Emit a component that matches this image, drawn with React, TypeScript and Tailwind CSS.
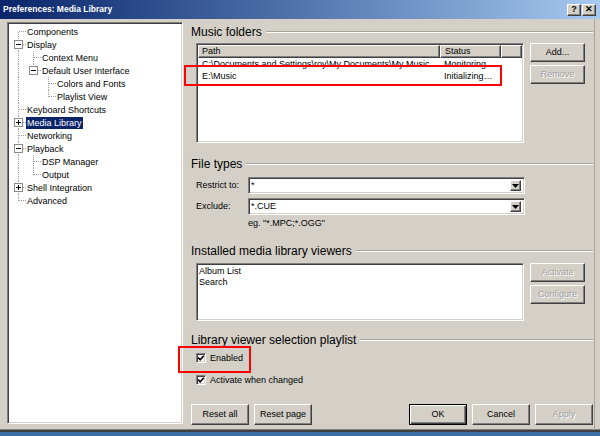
import React from 'react';

const sunken =
  'border border-t-[#808080] border-l-[#808080] border-b-white border-r-white shadow-[inset_1px_1px_0_#404040,inset_-1px_-1px_0_#d4d0c8]';
const raised =
  'border border-t-white border-l-white border-b-[#404040] border-r-[#404040] shadow-[inset_-1px_-1px_0_#808080]';

type TreeNode = {
  label: string;
  cont: boolean[];
  first?: boolean;
  last?: boolean;
  box?: '+' | '-';
  selected?: boolean;
};

const tree: TreeNode[] = [
  { label: 'Components', cont: [], first: true },
  { label: 'Display', cont: [], box: '-' },
  { label: 'Context Menu', cont: [true] },
  { label: 'Default User Interface', cont: [true], last: true, box: '-' },
  { label: 'Colors and Fonts', cont: [true, false] },
  { label: 'Playlist View', cont: [true, false], last: true },
  { label: 'Keyboard Shortcuts', cont: [] },
  { label: 'Media Library', cont: [], box: '+', selected: true },
  { label: 'Networking', cont: [] },
  { label: 'Playback', cont: [], box: '-' },
  { label: 'DSP Manager', cont: [true] },
  { label: 'Output', cont: [true], last: true },
  { label: 'Shell Integration', cont: [], box: '+' },
  { label: 'Advanced', cont: [], last: true },
];

function TreeRow({ node }: { node: TreeNode }) {
  const dot = { stroke: '#a0a0a0', strokeDasharray: '1 1', shapeRendering: 'crispEdges' as const };
  return (
    <div className="flex items-center h-[13px]">
      {node.cont.map((c, i) => (
        <svg key={i} width="15" height="13" className="shrink-0">
          {c && <line x1="7.5" y1="0" x2="7.5" y2="13" {...dot} />}
        </svg>
      ))}
      <svg width="15" height="13" className="shrink-0">
        <line x1="7.5" y1={node.first ? 6.5 : 0} x2="7.5" y2={node.last ? 6.5 : 13} {...dot} />
        <line x1="8" y1="6.5" x2="15" y2="6.5" {...dot} />
        {node.box && (
          <g shapeRendering="crispEdges">
            <rect x="3.5" y="2.5" width="8" height="8" fill="#fff" stroke="#8c8c8c" />
            <line x1="5" y1="6.5" x2="10" y2="6.5" stroke="#000" />
            {node.box === '+' && <line x1="7.5" y1="4" x2="7.5" y2="9" stroke="#000" />}
          </g>
        )}
      </svg>
      <span
        className={
          'px-[1px] h-[12px] leading-[12px] whitespace-nowrap ' +
          (node.selected ? 'bg-[#0a246a] text-white' : 'text-black')
        }
      >
        {node.label}
      </span>
    </div>
  );
}

function GroupTitle({ children }: { children: React.ReactNode }) {
  return (
    <div className="flex items-center h-[16px]">
      <span className="text-[12px] leading-[16px] whitespace-nowrap text-black">{children}</span>
      <div className="ml-[4px] flex-1 border-t border-t-[#a7a59f] border-b border-b-white" />
    </div>
  );
}

function Btn({
  label,
  w = 'w-[55px]',
  h = 'h-[19px]',
  disabled,
  isDefault,
}: {
  label: string;
  w?: string;
  h?: string;
  disabled?: boolean;
  isDefault?: boolean;
}) {
  const frame = isDefault
    ? 'border border-black shadow-[inset_1px_1px_0_#fff,inset_-1px_-1px_0_#404040,inset_-2px_-2px_0_#808080]'
    : raised;
  return (
    <div
      className={`${w} ${h} ${frame} bg-[#d4d0c8] flex items-center justify-center text-[9px] ${
        disabled ? 'text-[#a0a0a0] [text-shadow:1px_1px_0_#fff]' : 'text-black'
      }`}
    >
      {label}
    </div>
  );
}

function Combo({ value }: { value: string }) {
  return (
    <div className={`w-[277px] h-[17px] bg-white ${sunken} flex items-center pl-[2px] pr-[3px]`}>
      <span className="flex-1 text-[9px] leading-[13px]">{value}</span>
      <div className={`w-[11px] h-[11px] bg-[#d4d0c8] ${raised} flex items-center justify-center`}>
        <svg width="7" height="4" viewBox="0 0 7 4">
          <polygon points="0,0 7,0 3.5,4" fill="#000" />
        </svg>
      </div>
    </div>
  );
}

function Check({ label }: { label: string }) {
  return (
    <div className="flex items-center h-[12px] pl-[5px]">
      <div className={`w-[10px] h-[10px] bg-white ${sunken} flex items-center justify-center`}>
        <svg width="8" height="8" viewBox="0 0 8 8">
          <polyline points="1.2,3.6 3.2,5.8 6.8,1.8" fill="none" stroke="#000" strokeWidth="1.6" />
        </svg>
      </div>
      <span className="ml-[4px] text-[9px] leading-[12px]">{label}</span>
    </div>
  );
}

export default function App() {
  return (
    <div className="relative w-[600px] h-[436px] bg-[#3a6ea5] overflow-hidden font-['Liberation_Sans',Arial,sans-serif] text-black">
      <div className="h-[432px] flex flex-col bg-[#d4d0c8] border-b-2 border-b-[#404040] shadow-[inset_0_-1px_0_#808080]">
        {/* title bar */}
        <div className="h-[19px] shrink-0 flex items-center bg-gradient-to-r from-[#0a246a] to-[#a6caf0] pl-[3px] pr-[4px]">
          <span className="text-white font-bold text-[8.5px] leading-[19px] flex-1">Preferences: Media Library</span>
          <div className={`w-[14px] h-[12px] bg-[#d4d0c8] ${raised} flex items-center justify-center text-[9px] font-bold leading-none`}>
            ?
          </div>
          <div className={`ml-[1px] w-[14px] h-[12px] bg-[#d4d0c8] ${raised} flex items-center justify-center text-[9px] font-bold leading-none`}>
            ✕
          </div>
        </div>

        {/* body */}
        <div className="flex-1 flex">
          <div className="w-[595px] flex border-r border-r-[#a7a59f] pt-[3px]">
            {/* tree */}
            <div className={`ml-[7px] w-[176px] h-[402px] bg-white ${sunken} pt-[2px] pl-[3px] text-[9px]`}>
              {tree.map((n) => (
                <TreeRow key={n.label} node={n} />
              ))}
            </div>

            {/* settings */}
            <div className="ml-[8px] w-[402px] pt-[2px] flex flex-col text-[9px]">
              <GroupTitle>Music folders</GroupTitle>
              <div className="mt-[3px] flex pl-[5px]">
                <div className={`w-[328px] h-[100px] bg-white ${sunken} p-[1px]`}>
                  <div className="flex h-[13px] leading-[11px]">
                    <div className={`w-[242px] bg-[#d4d0c8] ${raised} pl-[3px]`}>Path</div>
                    <div className={`w-[61px] bg-[#d4d0c8] ${raised} pl-[4px]`}>Status</div>
                    <div className={`flex-1 bg-[#d4d0c8] ${raised}`} />
                  </div>
                  <div className="flex h-[12px] leading-[12px]">
                    <div className="w-[242px] pl-[4px] whitespace-nowrap overflow-hidden">
                      C:\Documents and Settings\roy\My Documents\My Music
                    </div>
                    <div className="pl-[4px] whitespace-nowrap">Monitoring</div>
                  </div>
                  <div className="flex h-[12px] leading-[12px]">
                    <div className="w-[242px] pl-[4px] whitespace-nowrap">E:\Music</div>
                    <div className="pl-[4px] whitespace-nowrap">Initializing…</div>
                  </div>
                </div>
                <div className="ml-[6px] flex flex-col gap-[3px]">
                  <Btn label="Add..." />
                  <Btn label="Remove" disabled />
                </div>
              </div>

              <div className="mt-[13px]">
                <GroupTitle>File types</GroupTitle>
              </div>
              <div className="mt-[5px] flex items-center pl-[5px]">
                <span className="w-[52px]">Restrict to:</span>
                <Combo value="*" />
              </div>
              <div className="mt-[4px] flex items-center pl-[5px]">
                <span className="w-[52px]">Exclude:</span>
                <Combo value="*.CUE" />
              </div>
              <div className="mt-[2px] pl-[57px] h-[12px] leading-[12px]">eg. "*.MPC;*.OGG"</div>

              <div className="mt-[14px]">
                <GroupTitle>Installed media library viewers</GroupTitle>
              </div>
              <div className="mt-[4px] flex pl-[5px]">
                <div className={`w-[328px] h-[58px] bg-white ${sunken} pt-[2px] pl-[2px]`}>
                  <div className="h-[11px] leading-[11px]">Album List</div>
                  <div className="h-[11px] leading-[11px]">Search</div>
                </div>
                <div className="ml-[6px] flex flex-col gap-[3px]">
                  <Btn label="Activate" disabled />
                  <Btn label="Configure" disabled />
                </div>
              </div>

              <div className="mt-[11px]">
                <GroupTitle>Library viewer selection playlist</GroupTitle>
              </div>
              <div className="mt-[4px]">
                <Check label="Enabled" />
              </div>
              <div className="mt-[10px]">
                <Check label="Activate when changed" />
              </div>

              <div className="mt-[18px] flex">
                <Btn label="Reset all" w="w-[58px]" h="h-[21px]" />
                <div className="ml-[5px]">
                  <Btn label="Reset page" w="w-[58px]" h="h-[21px]" />
                </div>
                <div className="ml-auto flex gap-[5px]">
                  <Btn label="OK" w="w-[58px]" h="h-[21px]" isDefault />
                  <Btn label="Cancel" w="w-[58px]" h="h-[21px]" />
                  <Btn label="Apply" w="w-[58px]" h="h-[21px]" disabled />
                </div>
              </div>
            </div>
          </div>
        </div>
      </div>

      {/* annotation boxes */}
      <div className="absolute left-[184px] top-[65px] w-[318px] h-[21px] border-2 border-[#ff0000]" />
      <div className="absolute left-[178px] top-[346px] w-[73px] h-[27px] border-2 border-[#ff0000]" />
    </div>
  );
}
